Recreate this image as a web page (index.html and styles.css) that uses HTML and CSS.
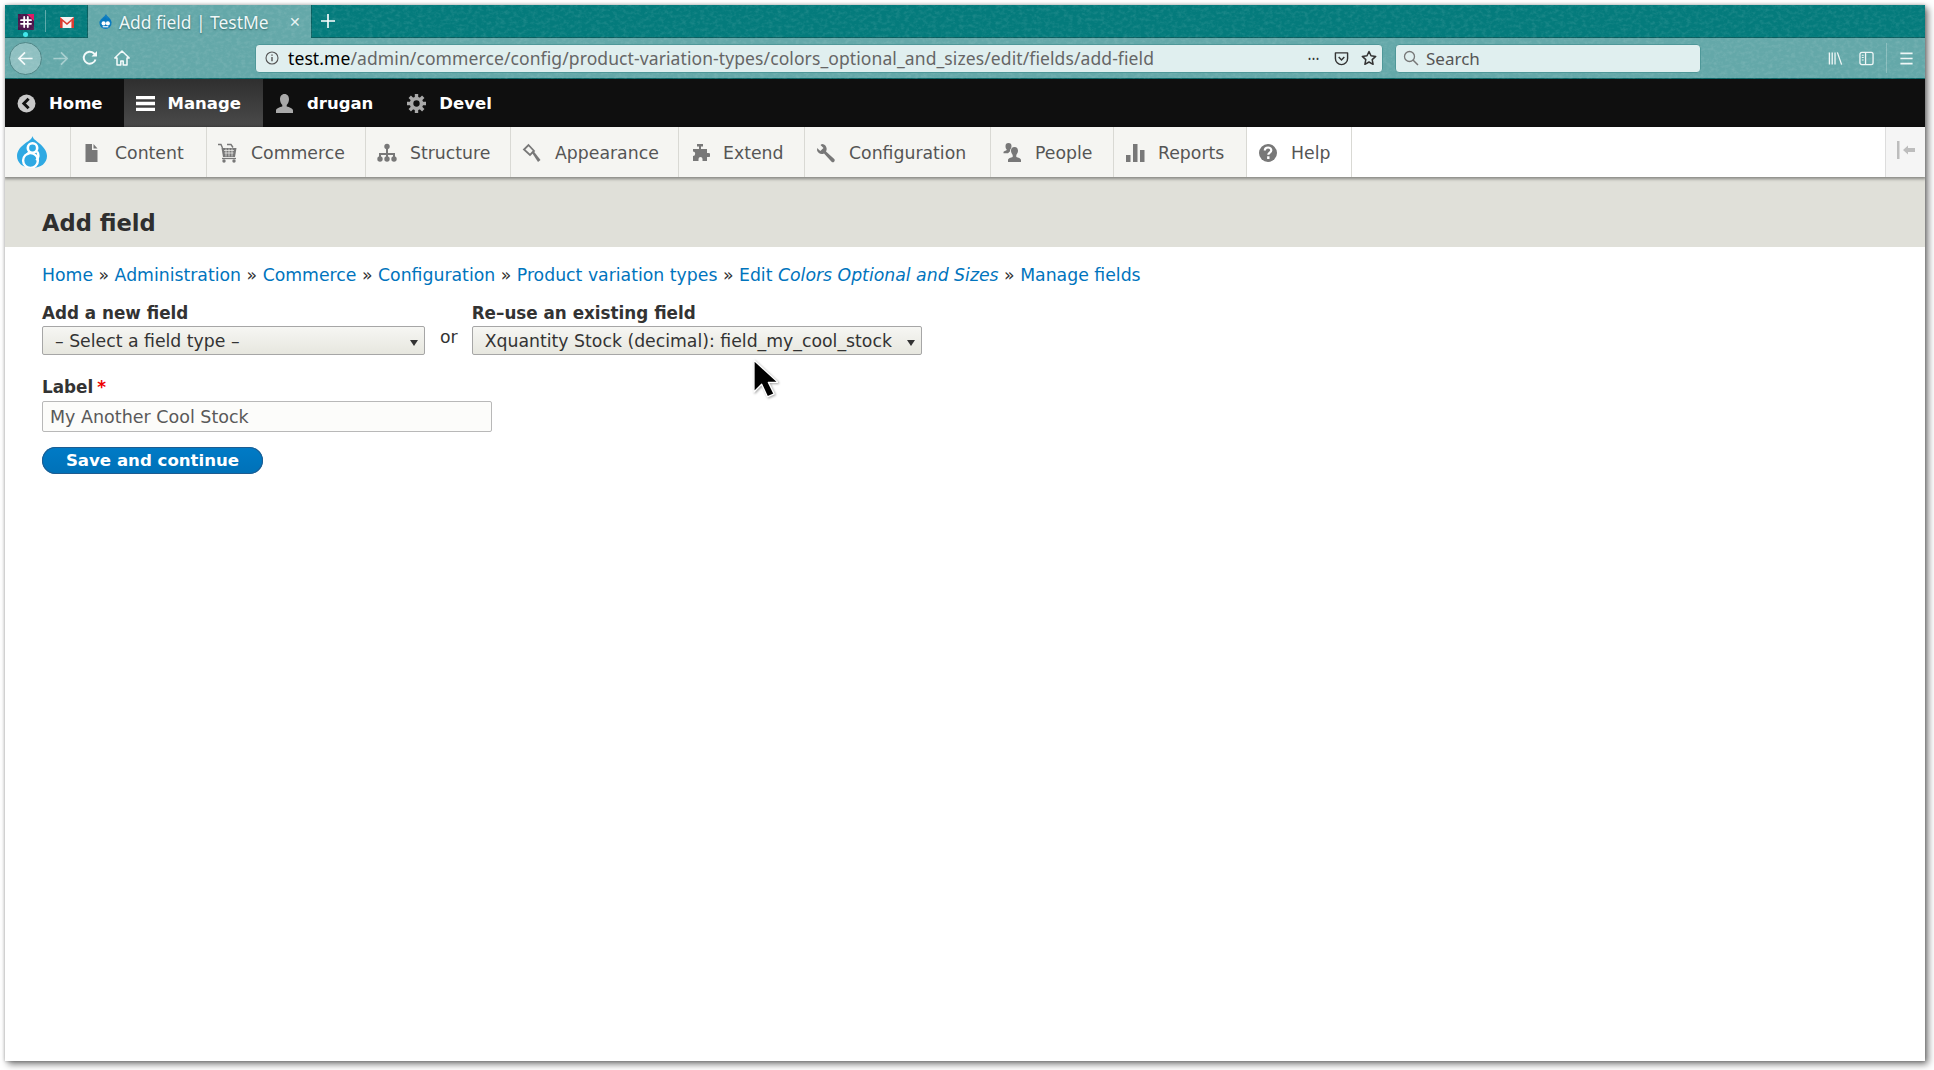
FILE: index.html
```html
<!DOCTYPE html>
<html lang="en">
<head>
<meta charset="utf-8">
<title>Add field | TestMe</title>
<link rel="stylesheet" href="styles.css">
</head>
<body>
<div class="window">
  <header class="chrome">
    <svg class="grain" aria-hidden="true"><filter id="grain-f"><feTurbulence type="fractalNoise" baseFrequency="0.22 0.3" numOctaves="3" seed="7"/><feColorMatrix values="0 0 0 0 1 0 0 0 0 1 0 0 0 0 1 0 0 0 1.5 -0.62"/></filter><rect width="100%" height="100%" filter="url(#grain-f)"/></svg>
    <div class="tabstrip">
      <div class="pinned pinned-slack">
        <svg class="fav" viewBox="0 0 16 16"><rect width="16" height="16" fill="#4a154b"/><path d="M9 0h7v7z" fill="#e01563"/><path d="M3 6.200h10M3 9.800h10M6.200 3v10M9.800 3v10" stroke="#fff" stroke-width="1.800" stroke-linecap="round"/></svg>
        <span class="pin-dot"></span>
      </div>
      <div class="pinned pinned-gmail">
        <svg class="fav" viewBox="0 0 16 16"><path d="M1 3h14v11H1z" fill="#f4f4f4"/><path d="M1 3l7 6 7-6v11h-2.600V7.200L8 11 3.600 7.200V14H1z" fill="#d93a30"/></svg>
      </div>
      <div class="tab">
        <svg class="fav-small" viewBox="0 0 16 16"><path d="M8.500 0C9 2.500 14.500 4.500 14.500 9.500a6.500 6.500 0 0 1-13 0C1.500 5 7.500 3 8.500 0z" fill="#0678be"/><circle cx="6" cy="10" r="2.200" fill="#fff"/><circle cx="10.500" cy="10" r="2.200" fill="#fff"/><path d="M5 13.600h6" stroke="#fff" stroke-width="1.200"/></svg>
        <span class="tab-title">Add field | TestMe</span>
        <span class="tab-close">✕</span>
      </div>
      <svg class="newtab" viewBox="0 0 14 14"><path d="M7 0v14M0 7h14" stroke="#fff" stroke-width="1.600"/></svg>
    </div>
    <div class="navbar">
      <div class="back">
        <svg class="nav-icon" viewBox="0 0 18 18"><path d="M16.500 9H2M8.500 2.500L2 9l6.500 6.500" fill="none" stroke="#f4fafa" stroke-width="1.800"/></svg>
      </div>
      <div class="nav-btn"><svg class="nav-icon dim" viewBox="0 0 18 18"><path d="M1.500 9H16M9.500 2.500L16 9l-6.500 6.500" fill="none" stroke="#f4fafa" stroke-width="1.800"/></svg></div>
      <div class="nav-btn"><svg class="nav-icon-s" viewBox="0 0 16 16"><path d="M13.500 9.500A6 6 0 1 1 11.800 3.300L14 5.200" fill="none" stroke="#f4fafa" stroke-width="1.900"/><path d="M15 1v5.500H9.500z" fill="#f4fafa"/></svg></div>
      <div class="nav-btn nav-home"><svg class="nav-icon-s" viewBox="0 0 16 16"><path d="M8 1L0.800 8h2.200v7h3.800v-4h2.400v4H13V8h2.200z" fill="none" stroke="#f4fafa" stroke-width="1.500" stroke-linejoin="round"/></svg></div>
      <div class="urlbar">
        <svg class="info" viewBox="0 0 14 14"><circle cx="7" cy="7" r="6" fill="none" stroke="#555" stroke-width="1.100"/><path d="M7 6v4.300M7 3.400v1.400" stroke="#555" stroke-width="1.400"/></svg>
        <span class="url"><span class="url-host">test.me</span>/admin/commerce/config/product-variation-types/colors_optional_and_sizes/edit/fields/add-field</span>
        <span class="url-dots">•••</span>
        <svg class="url-pocket" viewBox="0 0 16 16"><path d="M1.500 2h13v6a6.500 6.500 0 0 1-13 0z" fill="none" stroke="#333" stroke-width="1.500" stroke-linejoin="round"/><path d="M5 6.500l3 3 3-3" fill="none" stroke="#333" stroke-width="1.600"/></svg>
        <svg class="url-star" viewBox="0 0 16 16"><path d="M8 1.500l2 4.300 4.700.6-3.500 3.200.9 4.700L8 12l-4.100 2.300.9-4.700L1.300 6.400 6 5.800z" fill="none" stroke="#333" stroke-width="1.500" stroke-linejoin="round"/></svg>
      </div>
      <div class="searchbar">
        <svg class="search-icon" viewBox="0 0 16 16"><circle cx="6.500" cy="6.500" r="5" fill="none" stroke="#777" stroke-width="1.300"/><path d="M10 10l5 5" stroke="#777" stroke-width="1.500"/></svg>
        <span class="search-text">Search</span>
      </div>
      <div class="nav-tools">
        <svg class="tool" viewBox="0 0 16 16"><path d="M1.500 1.500v13M4.500 1.500v13M7.500 1.500v13M10 1.500l4.500 13" fill="none" stroke="#eef6f6" stroke-width="1.400"/></svg>
        <svg class="tool tool-side" viewBox="0 0 16 16"><rect x="1" y="1.500" width="14" height="13" rx="2" fill="none" stroke="#eef6f6" stroke-width="1.400"/><path d="M7 1.500v13" stroke="#eef6f6" stroke-width="1.400"/><path d="M3 4.500h2M3 7h2M3 9.500h2" stroke="#eef6f6" stroke-width="1.100"/></svg>
        <span class="tool-sep"></span>
        <svg class="tool tool-menu" viewBox="0 0 16 16"><path d="M1.500 2.500h13M1.500 8h13M1.500 13.500h13" stroke="#eef6f6" stroke-width="1.700"/></svg>
      </div>
    </div>
  </header>

  <nav class="toolbar">
    <a class="tb-item tb-home"><svg class="tb-icon" viewBox="0 0 18 18"><circle cx="9" cy="9" r="8.500" fill="#c9c9c9"/><path d="M11 4.500L6.500 9l4.500 4.500" fill="none" stroke="#111" stroke-width="2.800"/></svg>Home</a>
    <a class="tb-item tb-active"><svg class="tb-icon" viewBox="0 0 20 16"><path d="M0 0h20v3.600H0zM0 6.200h20v3.600H0zM0 12.400h20V16H0z" fill="#fff" fill-rule="evenodd"/></svg>Manage</a>
    <a class="tb-item"><svg class="tb-icon" viewBox="0 0 18 19"><path d="M9 0c3 0 4.500 2.300 4.500 5.200 0 2.600-1.200 4.600-2.300 5.800v1.500c2.500.8 6.300 1.600 6.300 4V19H.5v-2.500c0-2.400 3.800-3.200 6.300-4V11C5.700 9.800 4.500 7.800 4.500 5.200 4.500 2.300 6 0 9 0z" fill="#a9a9a9"/></svg>drugan</a>
    <a class="tb-item"><svg class="tb-icon" viewBox="0 0 18 18"><circle cx="9" cy="9" r="4.700" fill="none" stroke="#a9a9a9" stroke-width="3.400"/><path d="M9 0v4M9 14v4M0 9h4M14 9h4M2.600 2.600l2.900 2.900M12.500 12.500l2.900 2.900M15.400 2.600l-2.900 2.900M5.500 12.500l-2.900 2.900" stroke="#a9a9a9" stroke-width="3.200"/></svg>Devel</a>
  </nav>

  <nav class="tray">
    <a class="tray-logo">
      <svg class="logo" viewBox="0 0 30 32"><path d="M15.500 0c.5 3 3.500 4.500 7 7.500 4 3.400 7.500 7.500 7.500 12.500 0 7-6 12-15 12S0 27 0 20c0-5.500 4-9.500 8-12.500 3.500-2.600 6.800-4 7.500-7.500z" fill="#2fa9e3"/><circle cx="15.500" cy="12" r="4.700" fill="none" stroke="#fff" stroke-width="2.600"/><circle cx="13.500" cy="24.500" r="7.400" fill="none" stroke="#fff" stroke-width="2.400"/><path d="M10 18.500c1.500-1.300 2-2 2.500-2.500M20 15.500c2 2.500 1.500 6-.5 9" fill="none" stroke="#fff" stroke-width="2.400"/></svg>
    </a>
    <a class="tray-item"><svg class="tray-icon" viewBox="0 0 20 20"><path d="M3.500 1H10v6h5.500v12h-12zM11.500 1l4 4.500h-4z" fill="#787878"/></svg>Content</a>
    <a class="tray-item"><svg class="tray-icon" viewBox="0 0 20 20"><path d="M0 1.500h3L4.500 5M9 1.500h4L15 4.500" fill="none" stroke="#787878" stroke-width="1.400"/><path d="M3.500 5h15l-1.500 9H5z" fill="#787878"/><path d="M6 7.500h10M6.500 10h9M8 5.500v8M11 5.500v8M14 5.500v8" stroke="#f5f5f2" stroke-width=".7"/><path d="M4 15.500h14" stroke="#787878" stroke-width="1.300"/><circle cx="6" cy="18" r="1.700" fill="#787878"/><circle cx="16" cy="18" r="1.700" fill="#787878"/></svg>Commerce</a>
    <a class="tray-item"><svg class="tray-icon" viewBox="0 0 20 20"><circle cx="10" cy="3.500" r="2.700" fill="#787878"/><path d="M10 5v10M3 15v-4h14v4" fill="none" stroke="#787878" stroke-width="2"/><circle cx="3" cy="16" r="2.700" fill="#787878"/><circle cx="10" cy="16" r="2.700" fill="#787878"/><circle cx="17" cy="16" r="2.700" fill="#787878"/></svg>Structure</a>
    <a class="tray-item"><svg class="tray-icon" viewBox="0 0 20 20"><path d="M6.500 2l5.500 6-4 4-6-5.500z" fill="none" stroke="#787878" stroke-width="1.800"/><path d="M9.500 9l2-1 7 9-2.500 2z" fill="#787878"/></svg>Appearance</a>
    <a class="tray-item"><svg class="tray-icon" viewBox="0 0 20 20"><path d="M7 1h6v2.500h-2V6h6v4h1.500a2 2 0 0 1 0 4H17v4h-4.500v-2a2 2 0 0 0-4 0v2H3v-5a2.200 2.200 0 0 0 0-4.400V6h6V3.500H7z" fill="#787878"/></svg>Extend</a>
    <a class="tray-item"><svg class="tray-icon" viewBox="0 0 20 20"><path d="M6 1a5 5 0 0 1 4 7.500l8.500 7.800a2 2 0 0 1-2.700 2.700L8 10.500A5 5 0 0 1 1 5l3.300 3L7.500 5 4.500 2A5 5 0 0 1 6 1z" fill="#787878"/></svg>Configuration</a>
    <a class="tray-item"><svg class="tray-icon" viewBox="0 0 20 20"><path d="M6.500 0a3 3 0 0 1 3 3c0 1.700-.7 3-1.400 3.800v1.400l-2.100 2H1.500V9c0-1 2.500-1.500 3.300-2.100V6.800C4 6 3.500 4.700 3.500 3a3 3 0 0 1 3-3z" fill="#787878"/><path d="M12.500 4a3.500 3.500 0 0 1 3.500 3.500c0 2-.9 3.500-1.700 4.400v2c1.700.8 4.700 1.100 4.700 3.100v2H6v-2c0-2 3-2.300 4.700-3.100v-2C9.900 11 9 9.500 9 7.500A3.500 3.500 0 0 1 12.500 4z" fill="#787878"/></svg>People</a>
    <a class="tray-item"><svg class="tray-icon" viewBox="0 0 20 20"><path d="M1 12h4.500v7H1zM8 1h4.500v18H8zM15 7h4.500v12H15z" fill="#787878"/></svg>Reports</a>
    <a class="tray-item tray-white"><svg class="tray-icon" viewBox="0 0 20 20"><circle cx="10" cy="10" r="9" fill="#787878"/><path d="M6.800 7.500c0-2 1.500-3 3.300-3s3.200 1 3.200 2.800c0 2.400-3 2.400-3 4.500" fill="none" stroke="#fff" stroke-width="2.200"/><path d="M10.300 13.300v2.700" stroke="#fff" stroke-width="2.400"/></svg>Help</a>
    <div class="tray-fill"></div>
    <a class="tray-toggle"><svg class="toggle-icon" viewBox="0 0 20 20"><path d="M1 1h2.500v18H1z" fill="#bdbdbd"/><path d="M7 10l5-4.500V8h7v4h-7v2.500z" fill="#bdbdbd"/></svg></a>
  </nav>

  <section class="page-head"><h1 class="page-title">Add field</h1></section>

  <main class="content">
    <div class="breadcrumb">
      <a>Home</a> » <a>Administration</a> » <a>Commerce</a> » <a>Configuration</a> » <a>Product variation types</a> » <a>Edit <em>Colors Optional and Sizes</em></a> » <a>Manage fields</a>
    </div>
    <form class="field-form">
      <div class="field-row">
        <div class="field">
          <label class="lbl">Add a new field</label>
          <div class="select select-new"><span class="select-text">– Select a field type –</span></div>
        </div>
        <span class="or">or</span>
        <div class="field">
          <label class="lbl">Re–use an existing field</label>
          <div class="select select-old"><span class="select-text">Xquantity Stock (decimal): field_my_cool_stock</span></div>
        </div>
      </div>
      <div class="field field-label">
        <label class="lbl">Label<span class="req">*</span></label>
        <input class="text-input" type="text" value="My Another Cool Stock">
      </div>
      <button class="save" type="button">Save and continue</button>
    </form>
  </main>
</div>
<svg class="cursor" viewBox="0 0 26 40"><path d="M1 1v33l8-8 6 13 7-3-6-12h10z" fill="#000" stroke="#fff" stroke-width="1.400" stroke-linejoin="round"/></svg>
</body>
</html>
```

FILE: styles.css
```css
* { box-sizing: border-box; }
html, body { margin: 0; height: 100%; overflow: hidden; }
body { background: #fff; padding: 5px 9px 9px 5px; font-family: "DejaVu Sans", Verdana, sans-serif; font-size: 17.3px; color: #333; }
a { text-decoration: none; }
.window { width: 1920px; height: 1056px; background: #fff; box-shadow: 3px 3px 7px rgba(0,0,0,.55), 0 0 3px rgba(0,0,0,.25); display: flex; flex-direction: column; overflow: hidden; }

/* browser chrome */
.chrome { position: relative; height: 74px; background: #64a8a9; font-family: "Noto Sans", sans-serif; flex: none; }
.grain { position: absolute; left: 0; top: 0; width: 100%; height: 100%; opacity: .14; pointer-events: none; z-index: 2; }
.tabstrip { height: 33px; background: #047b7c; display: flex; align-items: stretch; border-bottom: 1px solid #0a5f60; }
.pinned { width: 41px; display: flex; align-items: center; justify-content: center; position: relative; }
.pinned-slack::after { content: ""; position: absolute; right: 0; top: 5px; bottom: 5px; width: 1px; background: rgba(255,255,255,.35); }
.fav { width: 16px; height: 16px; margin-top: 1px; }
.pin-dot { position: absolute; left: 18px; top: 27px; width: 5px; height: 5px; border-radius: 50%; background: #3fe6ea; }
.tab { width: 225px; height: 33px; background: #64a8a9; display: flex; align-items: center; padding-left: 10px; border-left: 1px solid #0a5f60; border-right: 1px solid #0a5f60; position: relative; z-index: 1; }
.fav-small { width: 15px; height: 15px; flex: none; }
.tab-title { margin-left: 6px; color: #eef7f7; font-size: 17.400px; text-shadow: 0 1px 2px rgba(0,60,60,.6); width: 170px; white-space: nowrap; }
.tab-close { color: #e6f2f2; font-size: 14px; }
.newtab { width: 14px; height: 14px; margin: 9px 0 0 9px; }

.navbar { height: 41px; display: flex; align-items: center; border-bottom: 1px solid #0d6667; }
.back { width: 33px; height: 33px; margin-left: 4px; border-radius: 50%; background: rgba(255,255,255,.28); border: 1px solid #4d8485; display: flex; align-items: center; justify-content: center; flex: none; }
.nav-btn { width: 30px; height: 30px; display: flex; align-items: center; justify-content: center; flex: none; }
.nav-btn:nth-child(2) { margin-left: 3px; }
.nav-home { margin-left: 2px; }
.nav-icon { width: 17px; height: 17px; }
.nav-icon.dim { opacity: .45; }
.nav-icon-s { width: 16px; height: 16px; }
.urlbar { width: 1128px; height: 29px; margin-left: 118px; background: #e0efef; border: 1px solid #4f9899; border-radius: 4px; display: flex; align-items: center; flex: none; position: relative; z-index: 3; padding-left: 9px; }
.info { width: 14px; height: 14px; flex: none; }
.url { margin-left: 9px; font-size: 17.500px; letter-spacing: .095px; color: #666; white-space: nowrap; flex: 1; }
.url-host { color: #000; }
.url-dots { font-size: 8px; color: #333; letter-spacing: 1px; margin-right: 14px; }
.url-pocket { width: 15px; height: 15px; margin-right: 12px; }
.url-star { width: 16px; height: 16px; margin-right: 5px; }
.searchbar { width: 306px; height: 29px; margin-left: 12px; background: #e0efef; border: 1px solid #4f9899; border-radius: 4px; display: flex; align-items: center; padding-left: 7px; flex: none; position: relative; z-index: 3; }
.search-icon { width: 16px; height: 16px; }
.search-text { margin-left: 7px; font-size: 17px; color: #555; }
.nav-tools { display: flex; align-items: center; margin-left: 127px; }
.tool { width: 15px; height: 15px; }
.tool-side { margin-left: 16px; }
.tool-sep { width: 1px; height: 30px; background: rgba(255,255,255,.25); margin-left: 12px; }
.tool-menu { margin-left: 12px; }

/* admin toolbar */
.toolbar { height: 48px; background: #0f0f0f; display: flex; flex: none; }
.tb-item { display: flex; align-items: center; padding: 0 22px 0 12px; color: #fff; font-weight: bold; font-size: 16.500px; }
.tb-home { padding-right: 21px; }
.tb-active { background: linear-gradient(#2f2f2f, #4a4a4a); }
.tb-icon { width: 19px; height: 19px; margin-right: 13px; flex: none; }

.tray { height: 50px; background: #fff; display: grid; grid-template-columns: 66px 136px 159px 145px 168px 126px 186px 123px 133px 105px 1fr 40px; flex: none; position: relative; box-shadow: 0 1px 3px 1px rgba(0,0,0,.4); z-index: 2; }
.tray-logo { background: #f5f5f2; border-right: 1px solid #d9d9d4; display: flex; align-items: center; padding-left: 12px; }
.logo { width: 30px; height: 32px; }
.tray-item { display: flex; align-items: center; padding: 2px 0 0 11px; background: #f5f5f2; border-right: 1px solid #d9d9d4; color: #555; font-size: 17.300px; white-space: nowrap; }
.tray-white { background: #fff; }
.tray-icon { width: 20px; height: 20px; margin-right: 13px; flex: none; }
.tray-toggle { background: #f5f5f5; border-left: 1px solid #ddd; display: flex; align-items: center; justify-content: center; }
.toggle-icon { width: 20px; height: 20px; margin-top: -4px; }

.page-head { height: 70px; background: #e0e0d9; padding: 29px 0 0 37px; flex: none; }
.page-title { margin: 0; font-size: 22.600px; line-height: 34px; color: #2f2f2f; font-weight: bold; }

.content { padding: 15px 37px 0; }
.breadcrumb { line-height: 26px; color: #333; white-space: nowrap; }
.breadcrumb a { color: #0074bd; }
.field-form { margin-top: 13px; }
.field-row { display: flex; align-items: flex-start; }
.field { display: flex; flex-direction: column; }
.lbl { font-weight: bold; font-size: 16.800px; line-height: 24px; color: #333; }
.field-row .lbl { margin-bottom: 1px; }
.req { color: #e00; margin-left: 4px; }
.select { height: 29px; background: linear-gradient(#f6f6f3, #e7e7df); border: 1px solid #a6a6a6; border-radius: 2px; display: flex; align-items: center; padding-left: 12px; position: relative; color: #333; }
.select::after { content: ""; position: absolute; right: 6px; top: 13px; border: 4px solid transparent; border-top: 6px solid #333; border-bottom: 0; }
.select-new { width: 383px; }
.select-old { width: 450px; }
.select-text { white-space: nowrap; }
.or { margin: 25px 14px 0 15px; line-height: 22px; color: #333; }
.field-label { margin-top: 20px; }
.text-input { width: 450px; height: 31px; margin-top: 2px; background: #fcfcfa; border: 1px solid #b8b8b8; border-radius: 2px; padding: 0 7px; font: inherit; font-size: 17.500px; color: #595959; }
.save { display: block; margin-top: 15px; width: 221px; height: 27px; border: 0; border-radius: 14px; background: linear-gradient(#007bc6, #0071b8); color: #fff; font: bold 16.600px "DejaVu Sans", sans-serif; padding: 0; box-shadow: 0 0 0 1px #1e5c90 inset; }

.cursor { position: absolute; left: 753px; top: 359px; width: 25px; height: 39px; z-index: 9; filter: drop-shadow(1px 1px 1px rgba(0,0,0,.35)); }
```
